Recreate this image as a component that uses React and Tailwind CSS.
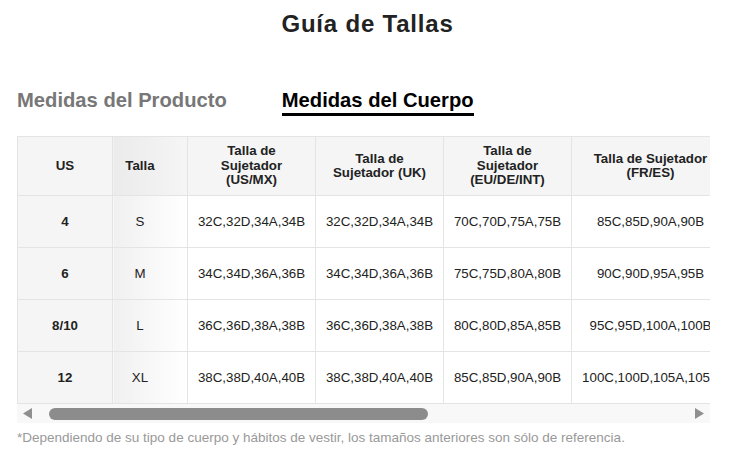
import React from 'react';

const headers = [
  'Talla de Sujetador (US/MX)',
  'Talla de Sujetador (UK)',
  'Talla de Sujetador (EU/DE/INT)',
  'Talla de Sujetador (FR/ES)',
];

const rows = [
  { us: '4', talla: 'S', sizes: ['32C,32D,34A,34B', '32C,32D,34A,34B', '70C,70D,75A,75B', '85C,85D,90A,90B'] },
  { us: '6', talla: 'M', sizes: ['34C,34D,36A,36B', '34C,34D,36A,36B', '75C,75D,80A,80B', '90C,90D,95A,95B'] },
  { us: '8/10', talla: 'L', sizes: ['36C,36D,38A,38B', '36C,36D,38A,38B', '80C,80D,85A,85B', '95C,95D,100A,100B'] },
  { us: '12', talla: 'XL', sizes: ['38C,38D,40A,40B', '38C,38D,40A,40B', '85C,85D,90A,90B', '100C,100D,105A,105B'] },
];

export default function App() {
  return (
    <div className="w-[731px] h-[462px] bg-white overflow-hidden [font-family:'Liberation_Sans',Arial,sans-serif] text-[#222]">
      {/* Title */}
      <h1 className="mt-[10px] pl-[4px] text-center text-[24px] leading-[27px] font-bold tracking-[0.8px] text-[#222]">
        Guía de Tallas
      </h1>

      <div className="ml-[17px] w-[693px]">
        {/* Tabs */}
        <div className="mt-[52px] flex items-start gap-[55px]">
          <span className="text-[20.2px] leading-[23px] font-bold text-[#777]">Medidas del Producto</span>
          <span className="text-[20.2px] leading-[23px] font-bold text-black pb-[1px] border-b-[3px] border-black">
            Medidas del Cuerpo
          </span>
        </div>

        {/* Table */}
        <div className="mt-[20px] overflow-hidden">
          <table className="border-collapse table-fixed w-[712px] text-[13.3px]">
            <colgroup>
              <col className="w-[95px]" />
              <col className="w-[75px]" />
              <col className="w-[128px]" />
              <col className="w-[128px]" />
              <col className="w-[128px]" />
              <col className="w-[158px]" />
            </colgroup>
            <thead>
              <tr className="h-[59px]">
                <th className="border border-[#e4e4e4] bg-[#f5f5f5] font-bold leading-[14.5px] px-2">US</th>
                <th className="border border-[#e4e4e4] bg-linear-to-r from-[#ebebeb] to-[#f5f5f5] font-bold leading-[14.5px] pl-1 pr-[24px]">
                  Talla
                </th>
                {headers.map((h) => (
                  <th key={h} className="border border-[#e4e4e4] bg-[#f5f5f5] font-bold leading-[14.5px] px-[12px]">
                    {h}
                  </th>
                ))}
              </tr>
            </thead>
            <tbody>
              {rows.map((r) => (
                <tr key={r.us} className="h-[52px]">
                  <td className="border border-[#e4e4e4] bg-[#f5f5f5] text-center font-bold">{r.us}</td>
                  <td className="border border-[#e4e4e4] bg-linear-to-r from-[#f0f0f0] to-white text-center pl-1 pr-[24px]">
                    {r.talla}
                  </td>
                  {r.sizes.map((s, i) => (
                    <td key={i} className="border border-[#e4e4e4] text-center whitespace-nowrap">
                      {s}
                    </td>
                  ))}
                </tr>
              ))}
            </tbody>
          </table>
        </div>

        {/* Scrollbar */}
        <div className="h-[19px] bg-[#f8f8f8] flex items-center pl-[6px] pr-[6px]">
          <svg width="9" height="11" viewBox="0 0 9 11" className="shrink-0">
            <polygon points="9,0 9,11 0,5.5" fill="#8f8f8f" />
          </svg>
          <div className="ml-[17px] w-[379px] h-[12px] rounded-full bg-[#8c8c8c]" />
          <div className="flex-1" />
          <svg width="9" height="11" viewBox="0 0 9 11" className="shrink-0">
            <polygon points="0,0 0,11 9,5.5" fill="#8f8f8f" />
          </svg>
        </div>

        {/* Note */}
        <p className="mt-[7px] text-[13.5px] leading-[16px] text-[#999] whitespace-nowrap">
          *Dependiendo de su tipo de cuerpo y hábitos de vestir, los tamaños anteriores son sólo de referencia.
        </p>
      </div>
    </div>
  );
}
